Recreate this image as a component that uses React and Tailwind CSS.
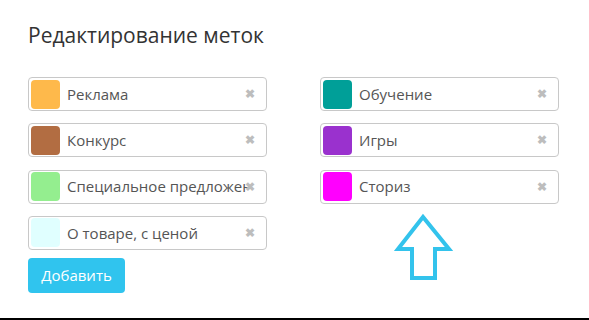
import React from "react";

const labels = [
  { name: "Реклама", color: "bg-[#feb94b]" },
  { name: "Обучение", color: "bg-[#009f98]" },
  { name: "Конкурс", color: "bg-[#b26d42]" },
  { name: "Игры", color: "bg-[#9a31ce]" },
  { name: "Специальное предложение", color: "bg-[#94ee8f]" },
  { name: "Сториз", color: "bg-[#ff00fe]" },
  { name: "О товаре, с ценой", color: "bg-[#e0ffff]" },
];

function LabelRow({ name, color }) {
  return (
    <div className="relative flex items-center h-[34px] border border-[#c8c8c8] rounded-[4px] bg-white pl-[2px] pr-[18px]">
      <div className={`w-[29px] h-[29px] rounded-[4px] shrink-0 ${color}`} />
      <div className="ml-[7px] flex-1 overflow-hidden whitespace-nowrap text-[15px] text-[#555]">
        {name}
      </div>
      {/* remove button sits over the end of the text */}
      <span className="absolute right-[11px] top-1/2 -translate-y-1/2 text-[12px] font-bold text-[#bdbdbd] leading-none">
        ✖
      </span>
    </div>
  );
}

export default function App() {
  return (
    <div
      className="relative h-[320px] bg-white border-b-2 border-black box-border pl-[28px] pt-[21px]"
      style={{ fontFamily: '"Open Sans", "Noto Sans", sans-serif' }}
    >
      <h2 className="text-[21px] text-[#333] leading-[29px]">Редактирование меток</h2>

      <div className="grid grid-cols-[239px_239px] gap-x-[53px] gap-y-[12.3px] mt-[27px]">
        {labels.map((l) => (
          <LabelRow key={l.name} {...l} />
        ))}
      </div>

      <button className="mt-[8px] h-[35px] w-[97px] rounded-[4px] bg-[#30c4ee] text-white text-[15px]">
        Добавить
      </button>

      {/* annotation arrow */}
      <svg
        className="absolute left-[393px] top-[212px]"
        width="62"
        height="72"
        viewBox="393 212 62 72"
      >
        <polygon
          points="423,217 398,249 412,249 412,278 435,278 435,249 449,249"
          fill="none"
          stroke="#33c3ec"
          strokeWidth="4"
          strokeLinejoin="miter"
        />
      </svg>
    </div>
  );
}
